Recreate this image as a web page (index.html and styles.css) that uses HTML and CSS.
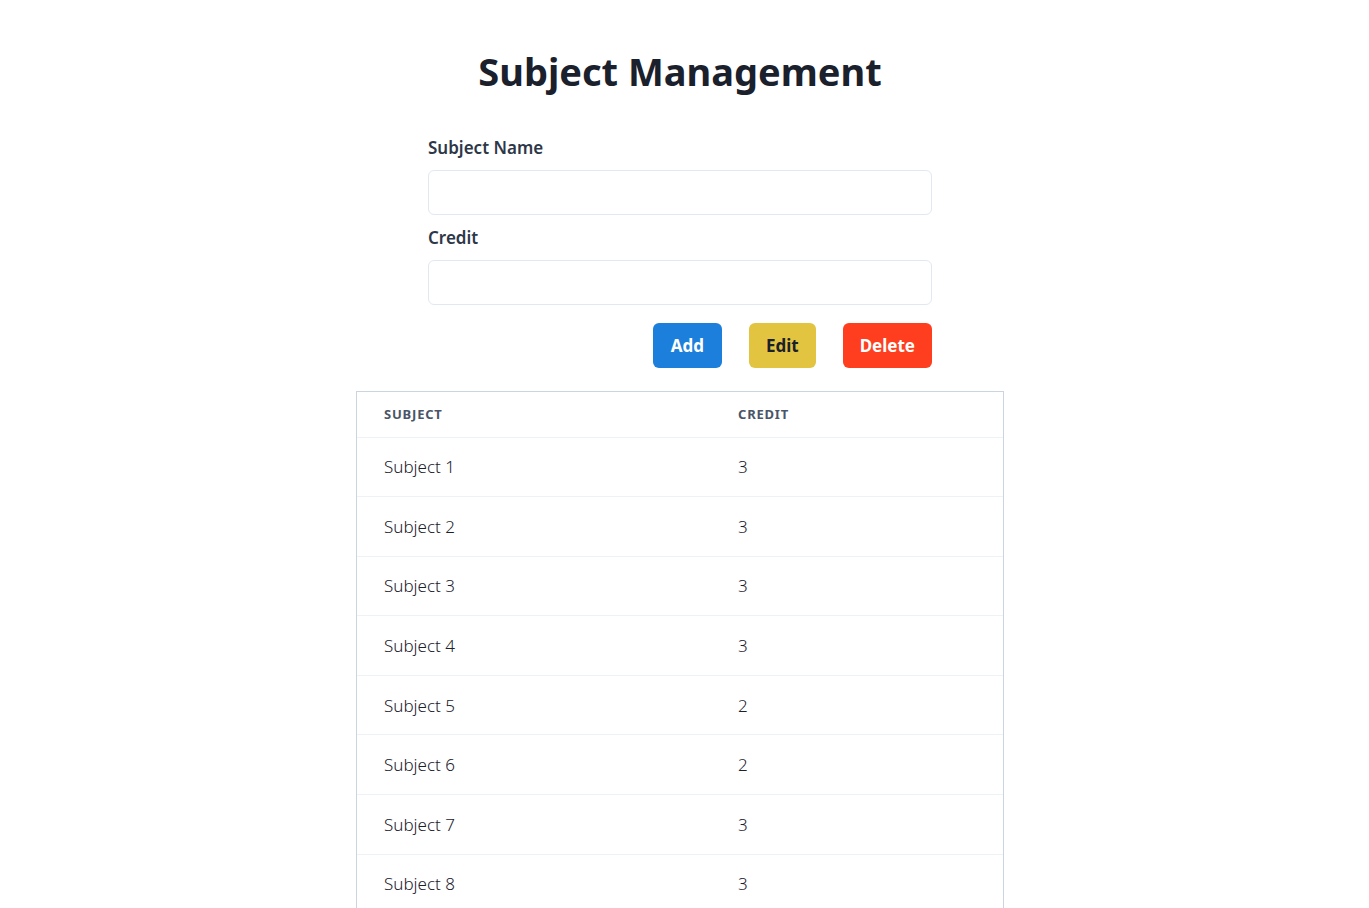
FILE: index.html
```html
<!DOCTYPE html>
<html lang="en">
<head>
<meta charset="utf-8">
<title>Subject Management</title>
<link rel="stylesheet" href="styles.css">
</head>
<body>
<main class="page">
  <h1 class="title">Subject Management</h1>
  <form class="form">
    <label class="label" for="name">Subject Name</label>
    <input class="input" id="name" type="text">
    <label class="label" for="credit">Credit</label>
    <input class="input" id="credit" type="text">
    <div class="actions">
      <button type="button" class="btn btn-add">Add</button>
      <button type="button" class="btn btn-edit">Edit</button>
      <button type="button" class="btn btn-delete">Delete</button>
    </div>
  </form>
  <div class="table-wrap">
    <table class="table">
      <colgroup>
        <col class="col-subject">
        <col class="col-credit">
      </colgroup>
      <thead>
        <tr><th>Subject</th><th>Credit</th></tr>
      </thead>
      <tbody>
        <tr><td>Subject 1</td><td>3</td></tr>
        <tr><td>Subject 2</td><td>3</td></tr>
        <tr><td>Subject 3</td><td>3</td></tr>
        <tr><td>Subject 4</td><td>3</td></tr>
        <tr><td>Subject 5</td><td>2</td></tr>
        <tr><td>Subject 6</td><td>2</td></tr>
        <tr><td>Subject 7</td><td>3</td></tr>
        <tr><td>Subject 8</td><td>3</td></tr>
        <tr><td>Subject 9</td><td>3</td></tr>
        <tr><td>Subject 10</td><td>3</td></tr>
      </tbody>
    </table>
  </div>
</main>
</body>
</html>
```
FILE: styles.css
```css
* { box-sizing: border-box; }
html, body { margin: 0; padding: 0; background: #ffffff; }
body {
  font-family: "Noto Sans", "Open Sans", "Liberation Sans", sans-serif;
  color: #1a202c;
}
.page {
  display: flex;
  flex-direction: column;
  align-items: center;
  padding-top: 43px;
  padding-right: 9px;
}
.title {
  margin: 0;
  font-size: 38px;
  font-weight: 700;
  line-height: 56px;
  color: #1a202c;
}
.form {
  width: 504px;
  display: flex;
  flex-direction: column;
  margin-top: 37px;
}
.label {
  font-size: 17px;
  font-weight: 600;
  line-height: 24px;
  color: #2d3748;
  margin-bottom: 10px;
}
.input {
  height: 45px;
  border: 1px solid #e2e8f0;
  border-radius: 6px;
  margin-bottom: 11px;
  font: inherit;
  padding: 0 12px;
  outline: none;
}
.actions {
  display: flex;
  justify-content: flex-end;
  gap: 27px;
  margin-top: 7px;
}
.btn {
  height: 45px;
  border: none;
  border-radius: 6px;
  font-family: inherit;
  font-size: 17px;
  font-weight: 700;
  padding: 0 17px;
  cursor: pointer;
}
.btn-add { background: #1c7fdc; color: #ffffff; padding: 0 18px; }
.btn-edit { background: #e2c440; color: #1a202c; }
.btn-delete { background: #fe3e1e; color: #ffffff; }
.table-wrap {
  width: 648px;
  margin-top: 23px;
  border: 1px solid #cbd5e0;
}
.table {
  width: 100%;
  border-collapse: collapse;
  table-layout: fixed;
}
.col-subject { width: 354px; }
.table th {
  text-align: left;
  font-size: 13px;
  font-weight: 700;
  letter-spacing: 0.8px;
  text-transform: uppercase;
  color: #4a5568;
  height: 45px;
  padding: 0 27px;
}
.table td {
  height: 59.6px;
  padding: 0 27px;
  font-size: 17px;
  font-weight: 300;
  color: #1a202c;
  border-top: 1px solid #edf2f7;
}
```
